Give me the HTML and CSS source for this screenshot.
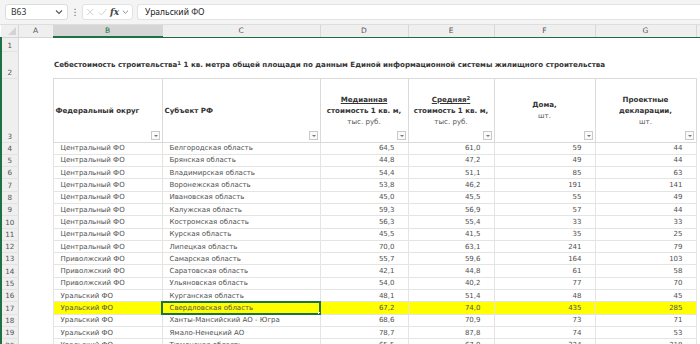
FILE: index.html
```html
<!DOCTYPE html>
<html lang="ru">
<head>
<meta charset="utf-8">
<title>Себестоимость строительства</title>
<link rel="stylesheet" href="styles.css">
</head>
<body>
<div class="app">
  <div class="formula-bar">
    <div class="namebox">
      <span class="nb-text">B63</span>
      <svg class="chev" width="8" height="6" viewBox="0 0 8 6"><path d="M1 1.5 L4 4.5 L7 1.5" fill="none" stroke="#555" stroke-width="1.1"/></svg>
    </div>
    <div class="dots">⋮</div>
    <div class="fxbox">
      <svg width="10" height="10" viewBox="0 0 10 10"><path d="M1.5 1.5 L8.5 8.5 M8.5 1.5 L1.5 8.5" stroke="#c8c8c8" stroke-width="1"/></svg>
      <svg width="11" height="10" viewBox="0 0 11 10"><path d="M1 5.5 L4 8.5 L10 1.5" fill="none" stroke="#c8c8c8" stroke-width="1"/></svg>
      <span class="fx">fx</span>
      <svg class="chev2" width="8" height="6" viewBox="0 0 8 6"><path d="M1 1.5 L4 4.5 L7 1.5" fill="none" stroke="#777" stroke-width="1"/></svg>
    </div>
    <div class="formula">Уральский ФО</div>
  </div>
  <table class="sheet">
    <colgroup>
      <col class="c-rh"><col class="c-a"><col class="c-b"><col class="c-c"><col class="c-d"><col class="c-e"><col class="c-f"><col class="c-g"><col class="c-h">
    </colgroup>
    <tr class="colhdr">
      <th class="corner"><svg width="10" height="10" viewBox="0 0 10 10"><path d="M9 1 L9 9 L1 9 Z" fill="#d4d4d4"/></svg></th>
      <th class="ch">A</th><th class="ch sel">B</th><th class="ch">C</th><th class="ch">D</th><th class="ch">E</th><th class="ch">F</th><th class="ch">G</th><th class="ch last"></th>
    </tr>
    <tr class="r1">
      <th class="rh">1</th><td colspan="8"></td>
    </tr>
    <tr class="r2">
      <th class="rh">2</th><td></td>
      <td colspan="7" class="title">Себестоимость строительства<sup>1</sup> 1 кв. метра общей площади по данным Единой информационной системы жилищного строительства</td>
    </tr>
    <tr class="r3">
      <th class="rh">3</th><td></td>
      <td class="hd hd-left"><div class="hd-in">Федеральный округ</div><span class="flt"></span></td>
      <td class="hd hd-left"><div class="hd-in">Субъект РФ</div><span class="flt"></span></td>
      <td class="hd hd-center"><div class="hd-in"><u>Медианная </u><br>стоимость 1 кв. м,<br><span class="n">тыс. руб.</span></div><span class="flt"></span></td>
      <td class="hd hd-center"><div class="hd-in"><u>Средняя<sup>2</sup></u><br>стоимость 1 кв. м,<br><span class="n">тыс. руб.</span></div><span class="flt"></span></td>
      <td class="hd hd-center"><div class="hd-in">Дома,<br><span class="n">шт.</span></div><span class="flt"></span></td>
      <td class="hd hd-center"><div class="hd-in">Проектные<br>декларации,<br><span class="n">шт.</span></div><span class="flt"></span></td>
      <td></td>
    </tr>
    <tr class="dr"><th class="rh">4</th><td></td><td class="tx">Центральный ФО</td><td class="tx">Белгородская область</td><td class="nm">64,5</td><td class="nm">61,0</td><td class="nm">59</td><td class="nm">44</td><td></td></tr>
    <tr class="dr"><th class="rh">5</th><td></td><td class="tx">Центральный ФО</td><td class="tx">Брянская область</td><td class="nm">44,8</td><td class="nm">47,2</td><td class="nm">49</td><td class="nm">44</td><td></td></tr>
    <tr class="dr"><th class="rh">6</th><td></td><td class="tx">Центральный ФО</td><td class="tx">Владимирская область</td><td class="nm">54,4</td><td class="nm">51,1</td><td class="nm">85</td><td class="nm">63</td><td></td></tr>
    <tr class="dr"><th class="rh">7</th><td></td><td class="tx">Центральный ФО</td><td class="tx">Воронежская область</td><td class="nm">53,8</td><td class="nm">46,2</td><td class="nm">191</td><td class="nm">141</td><td></td></tr>
    <tr class="dr"><th class="rh">8</th><td></td><td class="tx">Центральный ФО</td><td class="tx">Ивановская область</td><td class="nm">45,0</td><td class="nm">45,5</td><td class="nm">55</td><td class="nm">49</td><td></td></tr>
    <tr class="dr"><th class="rh">9</th><td></td><td class="tx">Центральный ФО</td><td class="tx">Калужская область</td><td class="nm">59,3</td><td class="nm">56,9</td><td class="nm">57</td><td class="nm">44</td><td></td></tr>
    <tr class="dr"><th class="rh">10</th><td></td><td class="tx">Центральный ФО</td><td class="tx">Костромская область</td><td class="nm">56,3</td><td class="nm">55,4</td><td class="nm">33</td><td class="nm">33</td><td></td></tr>
    <tr class="dr"><th class="rh">11</th><td></td><td class="tx">Центральный ФО</td><td class="tx">Курская область</td><td class="nm">45,5</td><td class="nm">41,5</td><td class="nm">35</td><td class="nm">25</td><td></td></tr>
    <tr class="dr"><th class="rh">12</th><td></td><td class="tx">Центральный ФО</td><td class="tx">Липецкая область</td><td class="nm">70,0</td><td class="nm">63,1</td><td class="nm">241</td><td class="nm">79</td><td></td></tr>
    <tr class="dr"><th class="rh">13</th><td></td><td class="tx">Приволжский ФО</td><td class="tx">Самарская область</td><td class="nm">55,7</td><td class="nm">59,6</td><td class="nm">164</td><td class="nm">103</td><td></td></tr>
    <tr class="dr"><th class="rh">14</th><td></td><td class="tx">Приволжский ФО</td><td class="tx">Саратовская область</td><td class="nm">42,1</td><td class="nm">44,8</td><td class="nm">61</td><td class="nm">58</td><td></td></tr>
    <tr class="dr"><th class="rh">15</th><td></td><td class="tx">Приволжский ФО</td><td class="tx">Ульяновская область</td><td class="nm">54,0</td><td class="nm">40,2</td><td class="nm">77</td><td class="nm">70</td><td></td></tr>
    <tr class="dr"><th class="rh">16</th><td></td><td class="tx">Уральский ФО</td><td class="tx">Курганская область</td><td class="nm">48,1</td><td class="nm">51,4</td><td class="nm">48</td><td class="nm">45</td><td></td></tr>
    <tr class="dr hl"><th class="rh">17</th><td></td><td class="tx">Уральский ФО</td><td class="tx active">Свердловская область<span class="handle"></span></td><td class="nm">67,2</td><td class="nm">74,0</td><td class="nm">435</td><td class="nm">285</td><td></td></tr>
    <tr class="dr"><th class="rh">18</th><td></td><td class="tx">Уральский ФО</td><td class="tx">Ханты-Мансийский АО - Югра</td><td class="nm">68,6</td><td class="nm">70,9</td><td class="nm">73</td><td class="nm">71</td><td></td></tr>
    <tr class="dr"><th class="rh">19</th><td></td><td class="tx">Уральский ФО</td><td class="tx">Ямало-Ненецкий АО</td><td class="nm">78,7</td><td class="nm">87,8</td><td class="nm">74</td><td class="nm">53</td><td></td></tr>
    <tr class="dr"><th class="rh">20</th><td></td><td class="tx">Уральский ФО</td><td class="tx">Тюменская область</td><td class="nm">65,5</td><td class="nm">67,0</td><td class="nm">324</td><td class="nm">218</td><td></td></tr>
  </table>
</div>
</body>
</html>
```
FILE: styles.css
```css
* { box-sizing: border-box; }
html, body { margin: 0; padding: 0; background: #fff; }
body { width: 700px; height: 344px; overflow: hidden; font-family: "DejaVu Sans", Verdana, sans-serif; }

.formula-bar {
  display: flex;
  align-items: center;
  height: 25px;
  padding: 0 0 1px 5px;
  background: #f4f4f4;
  border-bottom: 1px solid #dedede;
}
.namebox {
  width: 63px;
  height: 16px;
  background: #fff;
  border: 1px solid #dcdcdc;
  border-radius: 3px;
  display: flex;
  align-items: center;
  justify-content: space-between;
  padding: 0 4px 0 5px;
  font-family: "Noto Sans", sans-serif;
  font-size: 8.5px;
  color: #333;
}
.dots { width: 14px; text-align: center; font-size: 9px; color: #666; }
.fxbox {
  width: 51px;
  height: 16px;
  background: #fff;
  border: 1px solid #e2e2e2;
  border-radius: 3px;
  display: flex;
  align-items: center;
  gap: 3px;
  padding: 0 3px 0 3px;
}
.fx { font-family: "DejaVu Serif", "Liberation Serif", serif; font-style: italic; font-size: 9px; color: #444; font-weight: bold; }
.formula {
  flex: 1;
  margin-left: 4px;
  height: 16px;
  background: #fff;
  border: 1px solid #e2e2e2;
  border-right: none;
  border-radius: 3px 0 0 3px;
  display: flex;
  align-items: center;
  padding-left: 7px;
  font-family: "Noto Sans", sans-serif;
  font-size: 8.5px;
  color: #222;
}

.sheet {
  border-collapse: collapse;
  table-layout: fixed;
  width: 700px;
  font-size: 7px;
  color: #505050;
}
.c-rh { width: 17px; }
.c-a { width: 35px; }
.c-b { width: 109px; }
.c-c { width: 158px; }
.c-d { width: 88px; }
.c-e { width: 86px; }
.c-f { width: 101px; }
.c-g { width: 101px; }
.c-h { width: 5px; }

th, td { padding: 0; white-space: nowrap; overflow: hidden; }

.colhdr { height: 12px; }
.colhdr th {
  background: #efefef;
  font-weight: normal;
  font-size: 7.5px;
  color: #555;
  border-bottom: 1px solid #1f6b3e;
  border-right: 1px solid #d8d8d8;
  vertical-align: middle;
  line-height: 11px;
}
.colhdr .corner { border-bottom: 1px solid #d5d5d5; text-align: right; padding-right: 1px; }
.colhdr .corner svg { display: block; margin-left: auto; }
.colhdr th:nth-child(2) { border-bottom-color: #d5d5d5; }
.colhdr .sel { background: #d6d6d6; color: #1e7145; border-bottom: 2px solid #1e7145; }
.colhdr .last { border-right: none; }

.rh {
  background: #efefef;
  font-weight: normal;
  color: #555;
  font-size: 7.2px;
  text-align: center;
  vertical-align: bottom;
  border-left: 2px solid #1e7145;
  border-right: 1px solid #d8d8d8;
  border-bottom: 1px solid #e2e2e2;
  line-height: 11px;
}

.r1 { height: 14px; }
.r2 { height: 27px; }
.r3 { height: 64px; }
.dr { height: 12.3px; }

.title {
  font-weight: bold;
  color: #333;
  font-size: 7.1px;
  vertical-align: middle;
  padding-left: 1px;
}
sup { font-size: 0.75em; line-height: 0; vertical-align: 0.45em; }

.hd {
  position: relative;
  border: 1px solid #dadada;
  font-weight: bold;
  color: #333;
  vertical-align: middle;
  line-height: 11px;
  font-size: 7.1px;
}
.hd-left { text-align: left; padding-left: 2px; }
.hd-center { text-align: center; }
.hd .n { font-weight: normal; color: #555; }
.hd u { text-decoration-thickness: 1px; text-underline-offset: 1px; }
.flt {
  position: absolute;
  right: 2px;
  bottom: 2px;
  width: 9px;
  height: 9px;
  border: 1px solid #c9c9c9;
  background: #fafafa;
}
.flt::after {
  content: "";
  position: absolute;
  left: 2px;
  top: 3px;
  border-left: 2px solid transparent;
  border-right: 2px solid transparent;
  border-top: 2px solid #777;
}

.dr td { vertical-align: middle; line-height: 10px; }
.dr .tx, .dr .nm {
  border-bottom: 1px solid #e4e4e4;
  border-right: 1px solid #e4e4e4;
}
.dr .tx { padding-left: 7px; }
.dr td:nth-child(3) { border-left: 1px solid #e4e4e4; }
.dr .nm { text-align: right; padding-right: 13px; }
.hl .tx, .hl .nm { background: #ffff00; }
.active { position: relative; outline: 2px solid #1e7145; outline-offset: -1px; }
.handle {
  position: absolute;
  right: -2px;
  bottom: -2px;
  width: 4px;
  height: 4px;
  background: #1e7145;
  border: 1px solid #fff;
}
```
